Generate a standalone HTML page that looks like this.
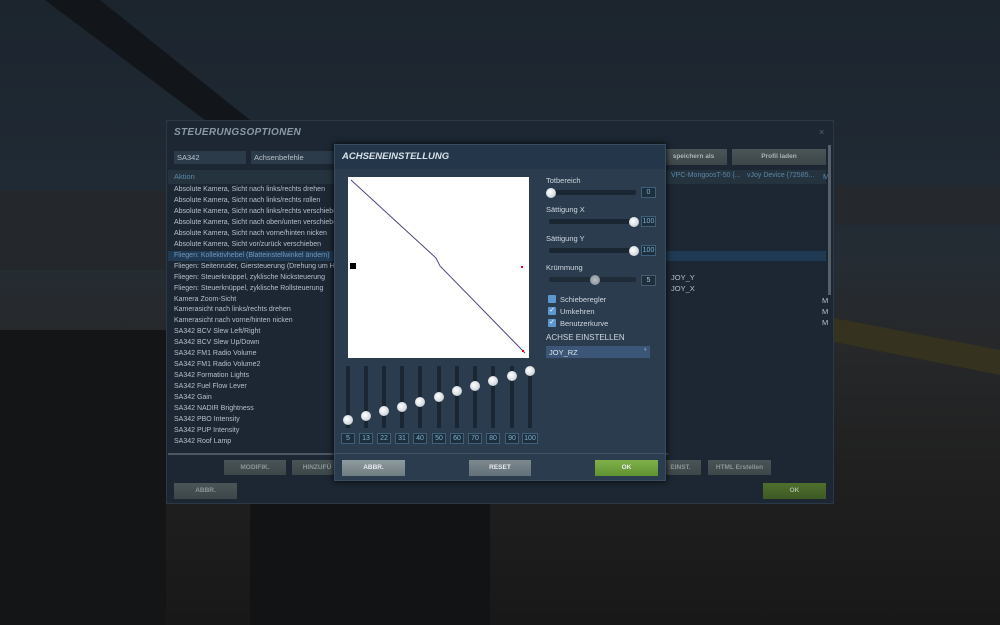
<!DOCTYPE html>
<html><head><meta charset="utf-8">
<style>
*{margin:0;padding:0;box-sizing:border-box}
body{width:1000px;height:625px;overflow:hidden;position:relative;font-family:"Liberation Sans","DejaVu Sans",sans-serif;background:#1c2128}
.a{position:absolute}
.bg{left:0;top:0;width:1000px;height:625px;background:linear-gradient(180deg,#1c252e 0%,#202a34 30%,#252c33 42%,#26282a 55%,#202020 75%,#181818 100%)}
.txt{font-size:7.5px;color:#b5c0c9;white-space:nowrap}
.btn{font-size:6.5px;font-weight:bold;color:#e6ebee;text-align:center;background:linear-gradient(#8e9b9f,#6f7c80);}
.btnd{font-size:6.5px;font-weight:bold;color:#8a9699;text-align:center;background:linear-gradient(#4a5558,#3d4649)}
.knob{width:10px;height:10px;border-radius:5px;background:radial-gradient(circle at 40% 40%,#fff,#d6dbe0 60%,#9aa3ab);}
.vb{width:15px;height:11px;border:1px solid #3f6078;background:#1d2e3d;color:#7fb1d0;font-size:7px;text-align:center;line-height:9px}
.cb{width:8px;height:8px;background:#5e96cf;border-radius:1px;color:#fff;font-size:7px;line-height:8px;text-align:center}
</style></head><body>
<div class="a bg"></div>
<svg class="a" style="left:0;top:0" width="1000" height="625">
<polygon points="45,0 100,0 250,120 205,120" fill="#121519"/>
<rect x="0" y="190" width="166" height="80" fill="#24282c"/>
<rect x="834" y="185" width="166" height="40" fill="#25292d"/>
<rect x="0" y="330" width="166" height="295" fill="#131517"/>
<rect x="250" y="504" width="240" height="121" fill="#111315"/>
<polygon points="834,318 1000,350 1000,375 834,342" fill="#35321f"/>
</svg>

<!-- main dialog -->
<div class="a" style="left:166px;top:120px;width:668px;height:384px;background:#1c2733;border:1px solid #2a3848"></div>
<div class="a" style="left:174px;top:127px;font-size:10px;font-weight:bold;font-style:italic;color:#8c9aa6;letter-spacing:.3px">STEUERUNGSOPTIONEN</div>
<div class="a txt" style="left:819px;top:127px;color:#59636c;font-size:9px">×</div>
<div class="a" style="left:174px;top:151px;width:72px;height:13px;background:#2c3b4a"></div>
<div class="a txt" style="left:177px;top:153px">SA342</div>
<div class="a" style="left:251px;top:151px;width:90px;height:13px;background:#2c3b4a"></div>
<div class="a txt" style="left:254px;top:153px">Achsenbefehle</div>
<div class="a btnd" style="left:660px;top:149px;width:67px;height:16px;line-height:16px;color:#aab4b8">speichern als</div>
<div class="a btnd" style="left:732px;top:149px;width:94px;height:16px;line-height:16px;color:#aab4b8">Profil laden</div>
<div class="a" style="left:168px;top:170px;width:658px;height:14px;background:#25333f"></div>
<div class="a txt" style="left:174px;top:172px;color:#5b87a8">Aktion</div>
<div class="a txt" style="left:671px;top:172px;color:#5b87a8;font-size:7px">VPC-MongoosT-50 {...</div>
<div class="a txt" style="left:747px;top:172px;color:#5b87a8;font-size:7px">vJoy Device {72585...</div>
<div class="a txt" style="left:823px;top:172px;color:#5b87a8">M</div>
<div class="a" style="left:168px;top:251px;width:658px;height:10px;background:#213a54"></div>
<div class="a" style="left:828px;top:145px;width:3px;height:150px;background:#55606a"></div>
<div class="a txt" style="left:174px;top:185px;line-height:10.95px;font-size:7px">
Absolute Kamera, Sicht nach links/rechts drehen<br>Absolute Kamera, Sicht nach links/rechts rollen<br>Absolute Kamera, Sicht nach links/rechts verschieben<br>Absolute Kamera, Sicht nach oben/unten verschieben<br>Absolute Kamera, Sicht nach vorne/hinten nicken<br>Absolute Kamera, Sicht vor/zurück verschieben<br><span style="color:#6e97c0">Fliegen: Kollektivhebel (Blatteinstellwinkel ändern)</span><br>Fliegen: Seitenruder, Giersteuerung (Drehung um Hochachse)<br>Fliegen: Steuerknüppel, zyklische Nicksteuerung<br>Fliegen: Steuerknüppel, zyklische Rollsteuerung<br>Kamera Zoom-Sicht<br>Kamerasicht nach links/rechts drehen<br>Kamerasicht nach vorne/hinten nicken<br>SA342 BCV Slew Left/Right<br>SA342 BCV Slew Up/Down<br>SA342 FM1 Radio Volume<br>SA342 FM1 Radio Volume2<br>SA342 Formation Lights<br>SA342 Fuel Flow Lever<br>SA342 Gain<br>SA342 NADIR Brightness<br>SA342 PBO Intensity<br>SA342 PUP Intensity<br>SA342 Roof Lamp</div>
<div class="a txt" style="left:671px;top:273px">JOY_Y</div>
<div class="a txt" style="left:671px;top:284px">JOY_X</div>
<div class="a txt" style="left:822px;top:295px;line-height:11px">M<br>M<br>M</div>
<div class="a" style="left:168px;top:453px;width:500px;height:2px;background:#4d5760"></div>
<div class="a btnd" style="left:224px;top:460px;width:62px;height:15px;line-height:15px">MODIFIK.</div>
<div class="a btnd" style="left:292px;top:460px;width:50px;height:15px;line-height:15px">HINZUFÜ</div>
<div class="a btnd" style="left:660px;top:460px;width:41px;height:15px;line-height:15px">EINST.</div>
<div class="a btnd" style="left:708px;top:460px;width:63px;height:15px;line-height:15px">HTML Erstellen</div>
<div class="a btnd" style="left:174px;top:483px;width:63px;height:16px;line-height:16px">ABBR.</div>
<div class="a btnd" style="left:763px;top:483px;width:63px;height:16px;line-height:16px;background:linear-gradient(#4f6f2e,#3e5a24);color:#a5b797">OK</div>

<!-- modal -->
<div class="a" style="left:334px;top:144px;width:332px;height:337px;background:#2a3c4e;border:1px solid #3a4d60;box-shadow:0 0 6px #000"></div>
<div class="a" style="left:335px;top:145px;width:330px;height:24px;background:#24374a"></div>
<div class="a" style="left:342px;top:151px;font-size:9.5px;font-weight:bold;font-style:italic;color:#d9e1e8">ACHSENEINSTELLUNG</div>
<div class="a" style="left:335px;top:453px;width:330px;height:1px;background:#3d5166"></div>
<svg class="a" style="left:348px;top:177px" width="181" height="181">
<rect x="0" y="0" width="181" height="181" fill="#fff"/>
<polyline points="3,3 88,81 92,89 177,176" fill="none" stroke="#4a4a80" stroke-width="1"/>
<rect x="2" y="86" width="6" height="6" fill="#000"/>
<rect x="173" y="89" width="2" height="2" fill="#e00"/>
<rect x="174" y="173" width="2" height="2" fill="#e00"/>
</svg>
<!-- right controls -->
<div class="a txt" style="left:546px;top:176px;color:#d0d8df">Totbereich</div>
<div class="a" style="left:549px;top:190px;width:87px;height:5px;background:#1a2733;border-radius:2px"></div>
<div class="a knob" style="left:546px;top:188px"></div>
<div class="a vb" style="left:641px;top:187px">0</div>
<div class="a txt" style="left:546px;top:205px;color:#d0d8df">Sättigung X</div>
<div class="a" style="left:549px;top:219px;width:87px;height:5px;background:#1a2733;border-radius:2px"></div>
<div class="a knob" style="left:629px;top:217px"></div>
<div class="a vb" style="left:641px;top:216px">100</div>
<div class="a txt" style="left:546px;top:234px;color:#d0d8df">Sättigung Y</div>
<div class="a" style="left:549px;top:248px;width:87px;height:5px;background:#1a2733;border-radius:2px"></div>
<div class="a knob" style="left:629px;top:246px"></div>
<div class="a vb" style="left:641px;top:245px">100</div>
<div class="a txt" style="left:546px;top:263px;color:#d0d8df">Krümmung</div>
<div class="a" style="left:549px;top:277px;width:87px;height:5px;background:#1f2c38;border-radius:2px"></div>
<div class="a knob" style="left:590px;top:275px;background:radial-gradient(circle,#b8bec4,#7f8890)"></div>
<div class="a vb" style="left:641px;top:275px;color:#b5c0c9;border-color:#4b5a68">5</div>
<div class="a cb" style="left:548px;top:295px"></div>
<div class="a txt" style="left:560px;top:295px;color:#d0d8df">Schieberegler</div>
<div class="a cb" style="left:548px;top:307px">✓</div>
<div class="a txt" style="left:560px;top:307px;color:#d0d8df">Umkehren</div>
<div class="a cb" style="left:548px;top:319px">✓</div>
<div class="a txt" style="left:560px;top:319px;color:#d0d8df">Benutzerkurve</div>
<div class="a txt" style="left:546px;top:333px;color:#d0d8df;font-size:8px">ACHSE EINSTELLEN</div>
<div class="a" style="left:546px;top:346px;width:104px;height:12px;background:#3b5676"></div>
<div class="a txt" style="left:549px;top:348px;color:#e0e6ec">JOY_RZ</div>
<div class="a txt" style="left:644px;top:347px;color:#8fa0b0;font-size:5px">▾</div>
<!-- curve sliders -->
<div class="a" style="left:346px;top:366px;width:4px;height:62px;background:#1a2632"></div>
<div class="a" style="left:364px;top:366px;width:4px;height:62px;background:#1a2632"></div>
<div class="a" style="left:382px;top:366px;width:4px;height:62px;background:#1a2632"></div>
<div class="a" style="left:400px;top:366px;width:4px;height:62px;background:#1a2632"></div>
<div class="a" style="left:418px;top:366px;width:4px;height:62px;background:#1a2632"></div>
<div class="a" style="left:437px;top:366px;width:4px;height:62px;background:#1a2632"></div>
<div class="a" style="left:455px;top:366px;width:4px;height:62px;background:#1a2632"></div>
<div class="a" style="left:473px;top:366px;width:4px;height:62px;background:#1a2632"></div>
<div class="a" style="left:491px;top:366px;width:4px;height:62px;background:#1a2632"></div>
<div class="a" style="left:510px;top:366px;width:4px;height:62px;background:#1a2632"></div>
<div class="a" style="left:528px;top:366px;width:4px;height:62px;background:#1a2632"></div>
<div class="a knob" style="left:343px;top:415px"></div>
<div class="a knob" style="left:361px;top:411px"></div>
<div class="a knob" style="left:379px;top:406px"></div>
<div class="a knob" style="left:397px;top:402px"></div>
<div class="a knob" style="left:415px;top:397px"></div>
<div class="a knob" style="left:434px;top:392px"></div>
<div class="a knob" style="left:452px;top:386px"></div>
<div class="a knob" style="left:470px;top:381px"></div>
<div class="a knob" style="left:488px;top:376px"></div>
<div class="a knob" style="left:507px;top:371px"></div>
<div class="a knob" style="left:525px;top:366px"></div>
<div class="a vb" style="left:341px;top:433px;width:14px">5</div>
<div class="a vb" style="left:359px;top:433px;width:14px">13</div>
<div class="a vb" style="left:377px;top:433px;width:14px">22</div>
<div class="a vb" style="left:395px;top:433px;width:14px">31</div>
<div class="a vb" style="left:413px;top:433px;width:14px">40</div>
<div class="a vb" style="left:432px;top:433px;width:14px">50</div>
<div class="a vb" style="left:450px;top:433px;width:14px">60</div>
<div class="a vb" style="left:468px;top:433px;width:14px">70</div>
<div class="a vb" style="left:486px;top:433px;width:14px">80</div>
<div class="a vb" style="left:505px;top:433px;width:14px">90</div>
<div class="a vb" style="left:522px;top:433px;width:16px">100</div>
<div class="a btn" style="left:342px;top:460px;width:63px;height:16px;line-height:16px">ABBR.</div>
<div class="a btn" style="left:469px;top:460px;width:62px;height:16px;line-height:16px;background:linear-gradient(#7d898d,#63707a)">RESET</div>
<div class="a btn" style="left:595px;top:460px;width:63px;height:16px;line-height:16px;background:linear-gradient(#7fb04a,#5f9232)">OK</div>
</body></html>
